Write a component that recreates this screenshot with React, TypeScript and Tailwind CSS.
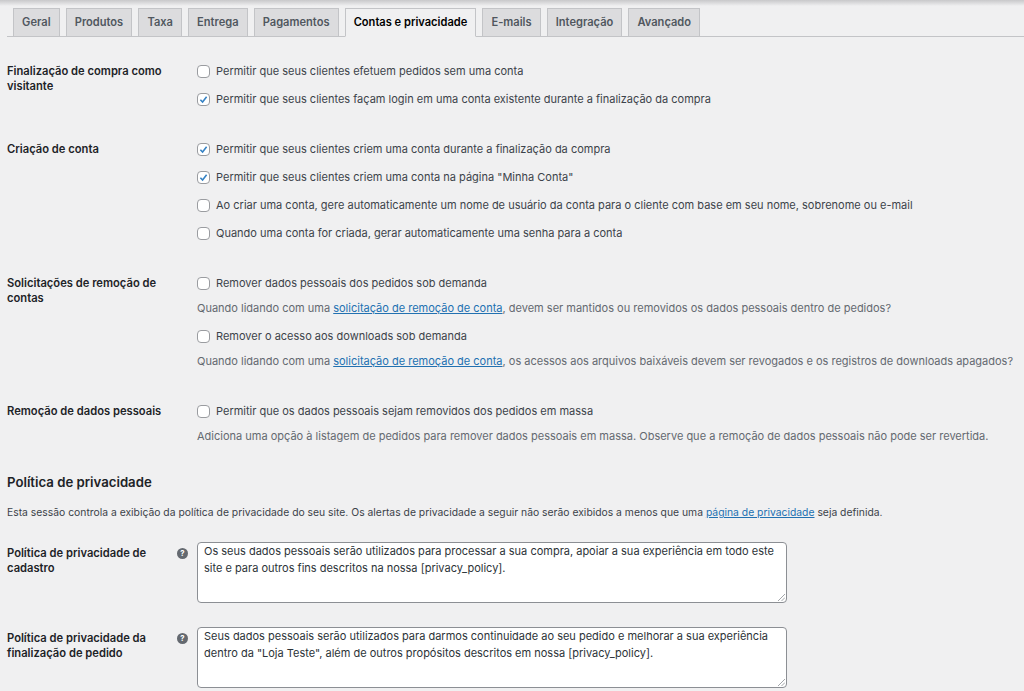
const tabs = ['Geral', 'Produtos', 'Taxa', 'Entrega', 'Pagamentos', 'Contas e privacidade', 'E-mails', 'Integração', 'Avançado'];

function Check({ checked = false, children }: { checked?: boolean; children: React.ReactNode }) {
  return (
    <label className="flex items-center h-[14px] gap-[6px] text-[11px] leading-[14px] text-[#3c434a] whitespace-nowrap">
      <span className="w-[13px] h-[13px] shrink-0 rounded-[4px] border border-[#9a9ca0] bg-white flex items-center justify-center">
        {checked && (
          <svg viewBox="0 0 12 12" className="w-[11px] h-[11px]">
            <path d="M2.6 6.2 L5 8.8 L9.4 3" fill="none" stroke="#3582c4" strokeWidth="1.7" />
          </svg>
        )}
      </span>
      {children}
    </label>
  );
}

function Desc({ children }: { children: React.ReactNode }) {
  return <p className="text-[11px] leading-[14px] text-[#646970] whitespace-nowrap">{children}</p>;
}

function Link({ children }: { children: React.ReactNode }) {
  return <a className="text-[#2271b1] underline">{children}</a>;
}

function Row({ label, className, children }: { label: string; className?: string; children: React.ReactNode }) {
  return (
    <div className={`flex ${className ?? ''}`}>
      <div className="w-[190px] shrink-0 text-[11.2px] leading-[15px] font-semibold text-[#1d2327] pr-4">{label}</div>
      <div className="flex flex-col">{children}</div>
    </div>
  );
}

function PolicyRow({ label, text, className }: { label: string; text: React.ReactNode; className?: string }) {
  return (
    <div className={`flex ${className ?? ''}`}>
      <div className="w-[190px] shrink-0 flex items-start pt-[4px]">
        <div className="w-[160px] text-[11.2px] leading-[15px] font-semibold text-[#1d2327]">{label}</div>
        <svg viewBox="0 0 20 20" className="w-[11px] h-[11px] mt-[2px] ml-[10px] shrink-0">
          <circle cx="10" cy="10" r="10" fill="#646970" />
          <text x="10" y="15" textAnchor="middle" fontSize="14" fontWeight="700" fill="#fff" fontFamily="Inter, sans-serif">?</text>
        </svg>
      </div>
      <div className="relative w-[590px] h-[61px] rounded-[4px] border border-[#8c8f94] bg-white px-[6px] py-0 text-[11px] leading-[17px] text-[#2c3338] whitespace-nowrap">
        {text}
        <svg viewBox="0 0 8 8" className="absolute right-[1px] bottom-[1px] w-[8px] h-[8px]">
          <path d="M1 8 L8 1 M4.5 8 L8 4.5" stroke="#8c8f94" strokeWidth="0.8" fill="none" />
        </svg>
      </div>
    </div>
  );
}

export default function App() {
  return (
    <div className="relative w-[1024px] h-[691px] overflow-hidden bg-[#f0f0f1] font-['Inter',sans-serif]">
      <div className="absolute inset-x-0 top-0 h-[6px] bg-gradient-to-b from-[#c8c8ca] to-[#f0f0f1]" />

      <div className="flex gap-[6px] h-[37px] pt-[8px] pl-[6px] ml-[7px] border-b border-[#c3c4c7] box-border">
        {tabs.map((t) => {
          const active = t === 'Contas e privacidade';
          return (
            <div
              key={t}
              className={`h-[29px] px-[8.1px] flex items-center border border-[#c3c4c7] text-[11.1px] font-semibold whitespace-nowrap ${active ? 'bg-[#f0f0f1] border-b-[#f0f0f1] text-black' : 'bg-[#dcdcde] text-[#50575e]'}`}
            >
              {t}
            </div>
          );
        })}
      </div>

      <div className="pl-[7px]">
        <Row label="Finalização de compra como visitante" className="pt-[27px]">
          <div className="flex flex-col gap-[14px]">
            <Check>Permitir que seus clientes efetuem pedidos sem uma conta</Check>
            <Check checked>Permitir que seus clientes façam login em uma conta existente durante a finalização da compra</Check>
          </div>
        </Row>

        <Row label="Criação de conta" className="pt-[36px]">
          <div className="flex flex-col gap-[14px]">
            <Check checked>Permitir que seus clientes criem uma conta durante a finalização da compra</Check>
            <Check checked>Permitir que seus clientes criem uma conta na página "Minha Conta"</Check>
            <Check>Ao criar uma conta, gere automaticamente um nome de usuário da conta para o cliente com base em seu nome, sobrenome ou e-mail</Check>
            <Check>Quando uma conta for criada, gerar automaticamente uma senha para a conta</Check>
          </div>
        </Row>

        <Row label="Solicitações de remoção de contas" className="pt-[36px]">
          <Check>Remover dados pessoais dos pedidos sob demanda</Check>
          <div className="mt-[11px]">
            <Desc>Quando lidando com uma <Link>solicitação de remoção de conta</Link>, devem ser mantidos ou removidos os dados pessoais dentro de pedidos?</Desc>
          </div>
          <div className="mt-[14px]">
            <Check>Remover o acesso aos downloads sob demanda</Check>
          </div>
          <div className="mt-[11px]">
            <Desc>Quando lidando com uma <Link>solicitação de remoção de conta</Link>, os acessos aos arquivos baixáveis devem ser revogados e os registros de downloads apagados?</Desc>
          </div>
        </Row>

        <Row label="Remoção de dados pessoais" className="pt-[36px]">
          <Check>Permitir que os dados pessoais sejam removidos dos pedidos em massa</Check>
          <div className="mt-[11px]">
            <Desc>Adiciona uma opção à listagem de pedidos para remover dados pessoais em massa. Observe que a remoção de dados pessoais não pode ser revertida.</Desc>
          </div>
        </Row>

        <h2 className="mt-[30px] text-[13.2px] leading-[18px] font-semibold text-[#1d2327]">Política de privacidade</h2>
        <p className="mt-[14px] text-[10.35px] leading-[14px] text-[#3c434a] whitespace-nowrap">
          Esta sessão controla a exibição da política de privacidade do seu site. Os alertas de privacidade a seguir não serão exibidos a menos que uma <Link>página de privacidade</Link> seja definida.
        </p>

        <PolicyRow
          className="mt-[23px]"
          label="Política de privacidade de cadastro"
          text={<>Os seus dados pessoais serão utilizados para processar a sua compra, apoiar a sua experiência em todo este<br />site e para outros fins descritos na nossa [privacy_policy].</>}
        />
        <PolicyRow
          className="mt-[24px]"
          label="Política de privacidade da finalização de pedido"
          text={<>Seus dados pessoais serão utilizados para darmos continuidade ao seu pedido e melhorar a sua experiência<br />dentro da "Loja Teste", além de outros propósitos descritos em nossa [privacy_policy].</>}
        />
      </div>
    </div>
  );
}
